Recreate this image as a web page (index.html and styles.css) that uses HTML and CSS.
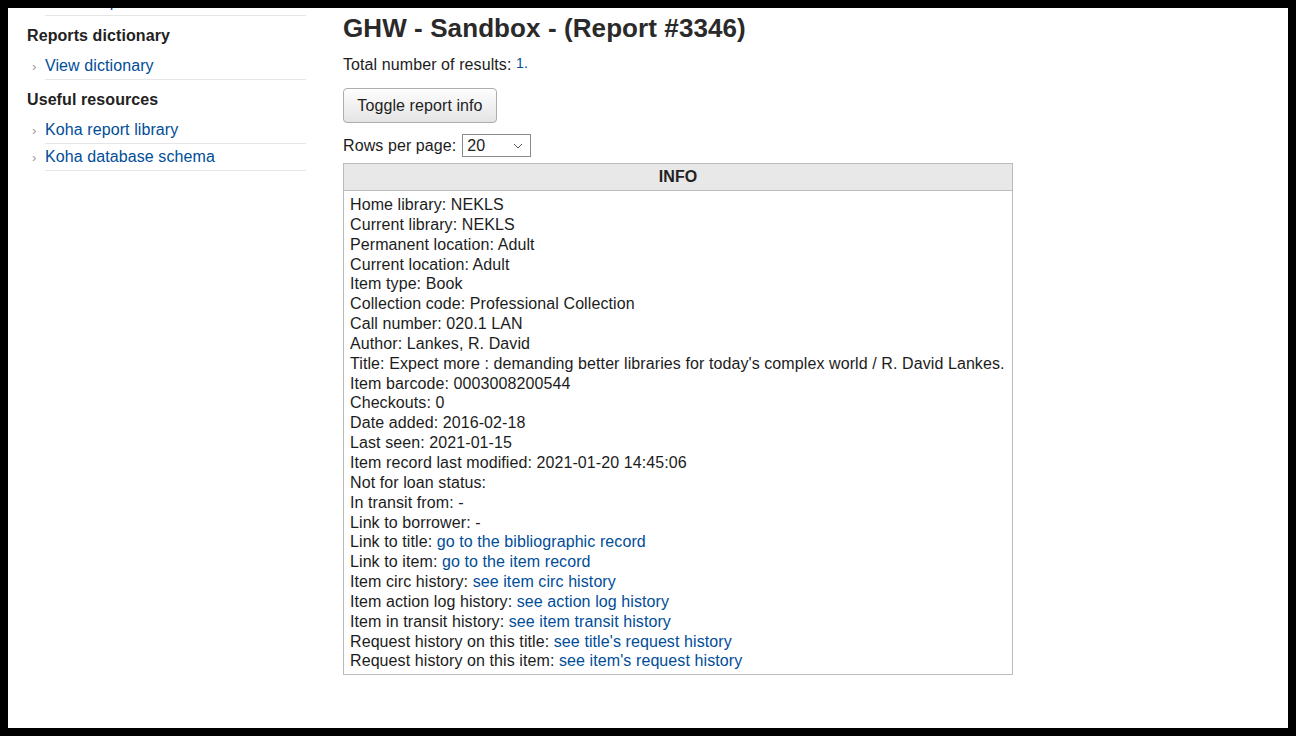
FILE: index.html
```html
<!DOCTYPE html>
<html lang="en">
<head>
<meta charset="utf-8">
<title>GHW - Sandbox - (Report #3346)</title>
<link rel="stylesheet" href="styles.css">
</head>
<body>
<div class="layout">
  <aside class="sidebar">
    <ul class="navlist first">
      <li><a href="#">Saved reports</a></li>
    </ul>
    <h5 class="navhead">Reports dictionary</h5>
    <ul class="navlist">
      <li><a href="#">View dictionary</a></li>
    </ul>
    <h5 class="navhead">Useful resources</h5>
    <ul class="navlist">
      <li><a href="#">Koha report library</a></li>
      <li><a href="#">Koha database schema</a></li>
    </ul>
  </aside>
  <main class="main">
    <h1 class="title">GHW - Sandbox - (Report #3346)</h1>
    <p class="total">Total number of results: <a href="#" class="count">1.</a></p>
    <button class="btn" type="button">Toggle report info</button>
    <div class="rows">
      <label for="rpp">Rows per page:</label>
      <span class="selectwrap">
        <select id="rpp" class="rpp">
          <option>20</option>
          <option>50</option>
          <option>100</option>
        </select>
        <svg class="chev" width="10" height="6" viewBox="0 0 10 6" aria-hidden="true"><path d="M1 1 L5 5 L9 1" fill="none" stroke="#555" stroke-width="1"/></svg>
      </span>
    </div>
    <table class="results">
      <thead>
        <tr><th>INFO</th></tr>
      </thead>
      <tbody>
        <tr><td>
          <div>Home library: NEKLS</div>
          <div>Current library: NEKLS</div>
          <div>Permanent location: Adult</div>
          <div>Current location: Adult</div>
          <div>Item type: Book</div>
          <div>Collection code: Professional Collection</div>
          <div>Call number: 020.1 LAN</div>
          <div>Author: Lankes, R. David</div>
          <div>Title: Expect more : demanding better libraries for today's complex world / R. David Lankes.</div>
          <div>Item barcode: 0003008200544</div>
          <div>Checkouts: 0</div>
          <div>Date added: 2016-02-18</div>
          <div>Last seen: 2021-01-15</div>
          <div>Item record last modified: 2021-01-20 14:45:06</div>
          <div>Not for loan status:</div>
          <div>In transit from: -</div>
          <div>Link to borrower: -</div>
          <div>Link to title: <a href="#">go to the bibliographic record</a></div>
          <div>Link to item: <a href="#">go to the item record</a></div>
          <div>Item circ history: <a href="#">see item circ history</a></div>
          <div>Item action log history: <a href="#">see action log history</a></div>
          <div>Item in transit history: <a href="#">see item transit history</a></div>
          <div>Request history on this title: <a href="#">see title's request history</a></div>
          <div>Request history on this item: <a href="#">see item's request history</a></div>
        </td></tr>
      </tbody>
    </table>
  </main>
</div>
</body>
</html>
```

FILE: styles.css
```css
html {
  background: #000;
}
body {
  margin: 8px;
  height: 720px;
  overflow: hidden;
  background: #fff;
  font-family: "Liberation Sans", Arial, sans-serif;
  font-size: 16px;
  letter-spacing: 0.09px;
  color: #1c1c1c;
}
a {
  color: #004d99;
  text-decoration: none;
}
.layout {
  display: flex;
  align-items: flex-start;
}
.sidebar {
  width: 279px;
  margin-left: 19px;
  flex: none;
}
.navhead {
  margin: 10px 0 8px;
  font-size: 16px;
  line-height: 19px;
  font-weight: bold;
  color: #222;
}
.navlist {
  list-style: none;
  margin: 0;
  padding: 0 0 0 18px;
}
.navlist.first {
  margin-top: -19px;
}
.navlist li {
  position: relative;
  padding: 4px 0;
  line-height: 18px;
  border-bottom: 1px solid #e6e6e6;
}
.navlist li::before {
  content: "\203A";
  position: absolute;
  left: -13px;
  top: 5px;
  font-size: 13px;
  color: #9a9a9a;
}
.main {
  margin-left: 37px;
  flex: 1;
}
.title {
  margin: 5px 0 12px;
  font-size: 26px;
  line-height: 30px;
  font-weight: bold;
  color: #2a2a2a;
}
.total {
  margin: 0 0 13px;
  line-height: 20px;
}
.count {
  font-size: 14px;
  position: relative;
  top: -2px;
}
.btn {
  display: block;
  width: 154px;
  height: 35px;
  padding: 0 8px;
  font-family: "Liberation Sans", Arial, sans-serif;
  font-size: 16px;
  letter-spacing: 0.09px;
  color: #222;
  background: linear-gradient(#fefefe, #e4e4e4);
  border: 1px solid #adadad;
  border-radius: 4px;
}
.rows {
  display: flex;
  align-items: center;
  gap: 6px;
  margin-top: 10px;
  height: 24px;
}
.rows label {
  position: relative;
  top: 1px;
}
.selectwrap {
  position: relative;
  display: inline-block;
  height: 23px;
}
.rpp {
  -webkit-appearance: none;
  appearance: none;
  width: 69px;
  height: 23px;
  font-family: "Liberation Sans", Arial, sans-serif;
  font-size: 16px;
  color: #222;
  border: 1px solid #8a8a8a;
  border-radius: 0;
  background: #fff;
  padding: 0 4px;
}
.chev {
  position: absolute;
  right: 8px;
  top: 9px;
  pointer-events: none;
}
.results {
  margin-top: 6px;
  width: 670px;
  border-collapse: collapse;
  border: 1px solid #bcbcbc;
}
.results th {
  height: 26px;
  padding: 0;
  background: #e8e8e8;
  border-bottom: 1px solid #bcbcbc;
  font-size: 16px;
  font-weight: bold;
  color: #222;
  text-align: center;
}
.results td {
  padding: 4px 6px 3px;
  line-height: 19.85px;
  vertical-align: top;
  white-space: nowrap;
}
```
